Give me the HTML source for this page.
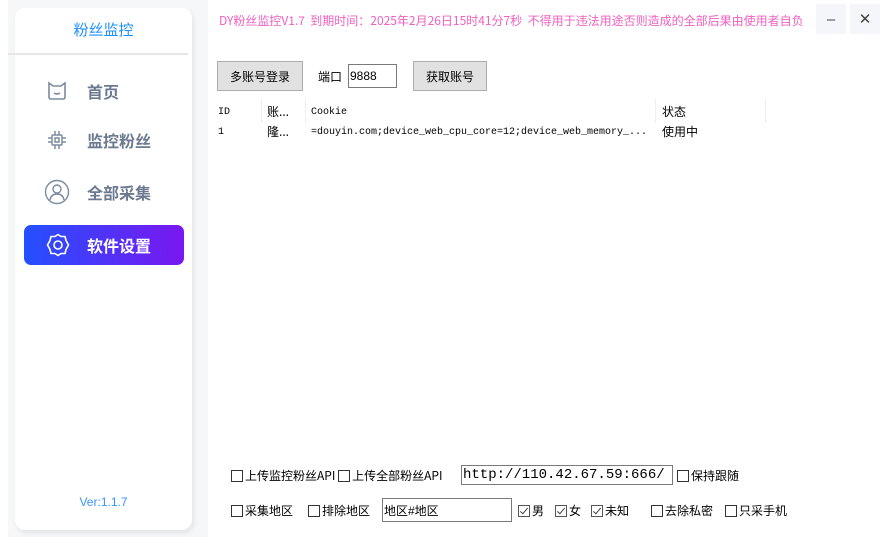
<!DOCTYPE html>
<html><head><meta charset="utf-8"><style>
*{margin:0;padding:0;box-sizing:border-box}
body{width:883px;height:537px;background:#fff;position:relative;overflow:hidden;font-family:"Liberation Sans","Noto Sans CJK SC",sans-serif;}
.bg{position:absolute;left:8px;top:0;width:200px;height:537px;background:#f6f7f9}
.side{position:absolute;left:15px;top:8px;width:177px;height:522px;background:#fff;border-radius:10px;box-shadow:2px 3px 6px rgba(0,0,0,0.08)}
.title{position:absolute;left:0;width:100%;top:11px;text-align:center;color:#1e8fff;font-size:15px}
.line{position:absolute;left:-7px;top:45px;width:180px;height:2px;background:#e4e6ea}
.item{position:absolute;left:9px;width:160px;height:40px;display:flex;align-items:center;color:#6b7a90;font-size:16px;font-weight:bold}
.item svg{position:absolute;left:22px}
.item span{position:absolute;left:63px}
.act{background:linear-gradient(90deg,#2450ff,#7a17f0);border-radius:7px;color:#fff}
.ver{position:absolute;left:0;width:100%;top:487px;text-align:center;color:#3594ff;font-size:12px}
.m{position:absolute;font-family:"SimSun","Noto Sans CJK SC",sans-serif;font-size:12px;color:#000;white-space:nowrap}
.mono{font-family:"Liberation Mono","Noto Sans CJK SC",monospace;font-size:10px}
.pink{color:#f060c0;font-size:12px}
.btn{position:absolute;background:#e1e1e1;border:1px solid #adadad;font-size:12px;display:flex;align-items:center;justify-content:center}
.inp{position:absolute;border:1px solid #7a7a7a;background:#fff;font-size:12px;padding-left:1px;display:flex;align-items:center}
.cb{display:inline-block;width:12px;height:12px;border:1px solid #333;vertical-align:-2px;margin-right:2px;background:#fff;position:relative}
.ck{border-color:#555}
.ck:after{content:"";position:absolute;left:3px;top:0px;width:3px;height:7px;border:solid #444;border-width:0 1.5px 1.5px 0;transform:rotate(40deg)}
.wb{position:absolute;top:4px;width:30px;height:30px;background:#f5f6f9;display:flex;align-items:center;justify-content:center;font-size:15px;color:#444}
.sep{position:absolute;top:99px;width:1px;height:24px;background:#eee}
</style></head><body>
<div class="bg"></div>
<div class="side">
 <div class="title">粉丝监控</div>
 <div class="line"></div>
 <div class="item" style="top:63px"><svg width="22" height="22" viewBox="0 0 22 22" fill="none" stroke="#7d8ba0" stroke-width="1.6"><path d="M3 3 L7 6 H15 L19 3 V17 Q19 19 17 19 H5 Q3 19 3 17 Z"/><path d="M8 13 Q11 15 14 13"/></svg><span>首页</span></div>
 <div class="item" style="top:112px"><svg width="22" height="22" viewBox="0 0 22 22" fill="none" stroke="#7d8ba0" stroke-width="1.5"><rect x="6" y="6" width="10" height="10" rx="1"/><rect x="9" y="9" width="4" height="4"/><path d="M9 2v4M13 2v4M9 16v4M13 16v4M2 9h4M2 13h4M16 9h4M16 13h4"/></svg><span>监控粉丝</span></div>
 <div class="item" style="top:164px"><svg width="26" height="26" viewBox="0 0 26 26" fill="none" stroke="#7d8ba0" stroke-width="1.4" style="left:20px"><circle cx="13" cy="13" r="11.5"/><circle cx="13" cy="10" r="4"/><path d="M6 21 Q7 15 13 15 Q19 15 20 21"/></svg><span>全部采集</span></div>
 <div class="item act" style="top:217px"><svg width="24" height="24" viewBox="0 0 24 24" fill="none" stroke="#fff" stroke-width="1.6"><path d="M12 1.5 L15 3.5 L19 3.5 L20 7.5 L22.5 12 L20 16.5 L19 20.5 L15 20.5 L12 22.5 L9 20.5 L5 20.5 L4 16.5 L1.5 12 L4 7.5 L5 3.5 L9 3.5 Z" stroke-linejoin="round"/><circle cx="12" cy="12" r="4"/></svg><span>软件设置</span></div>
 <div class="ver">Ver:1.1.7</div>
</div>

<div class="m pink" style="left:219px;top:12px">DY粉丝监控V1.7&nbsp;&nbsp;到期时间：2025年2月26日15时41分7秒&nbsp;&nbsp;不得用于违法用途否则造成的全部后果由使用者自负</div>
<div class="wb" style="left:816px">–</div>
<div class="wb" style="left:850px">✕</div>

<div class="btn" style="left:217px;top:61px;width:86px;height:30px">多账号登录</div>
<div class="m" style="left:318px;top:68px">端口</div>
<div class="inp" style="left:348px;top:64px;width:49px;height:24px">9888</div>
<div class="btn" style="left:413px;top:61px;width:74px;height:30px">获取账号</div>

<div class="sep" style="left:261px"></div><div class="sep" style="left:305px"></div><div class="sep" style="left:655px"></div><div class="sep" style="left:765px"></div>
<div class="m mono" style="left:218px;top:107px">ID</div>
<div class="m" style="left:267px;top:103px">账...</div>
<div class="m mono" style="left:311px;top:107px">Cookie</div>
<div class="m" style="left:662px;top:103px">状态</div>
<div class="m mono" style="left:218px;top:127px">1</div>
<div class="m" style="left:267px;top:123px">隆...</div>
<div class="m mono" style="left:311px;top:127px">=douyin.com;device_web_cpu_core=12;device_web_memory_...</div>
<div class="m" style="left:662px;top:123px">使用中</div>

<div class="m" style="left:231px;top:467px"><span class="cb"></span>上传监控粉丝API <span class="cb"></span>上传全部粉丝API</div>
<div class="inp" style="left:461px;top:465px;width:212px;height:20px;font-family:'Liberation Mono',monospace;font-size:14px">http://110.42.67.59:666/</div>
<div class="m" style="left:677px;top:467px"><span class="cb"></span>保持跟随</div>

<div class="m" style="left:231px;top:502px"><span class="cb"></span>采集地区</div>
<div class="m" style="left:308px;top:502px"><span class="cb"></span>排除地区</div>
<div class="inp" style="left:382px;top:498px;width:130px;height:24px">地区#地区</div>
<div class="m" style="left:518px;top:502px"><span class="cb ck"></span>男</div>
<div class="m" style="left:555px;top:502px"><span class="cb ck"></span>女</div>
<div class="m" style="left:591px;top:502px"><span class="cb ck"></span>未知</div>
<div class="m" style="left:651px;top:502px"><span class="cb"></span>去除私密</div>
<div class="m" style="left:725px;top:502px"><span class="cb"></span>只采手机</div>
</body></html>
